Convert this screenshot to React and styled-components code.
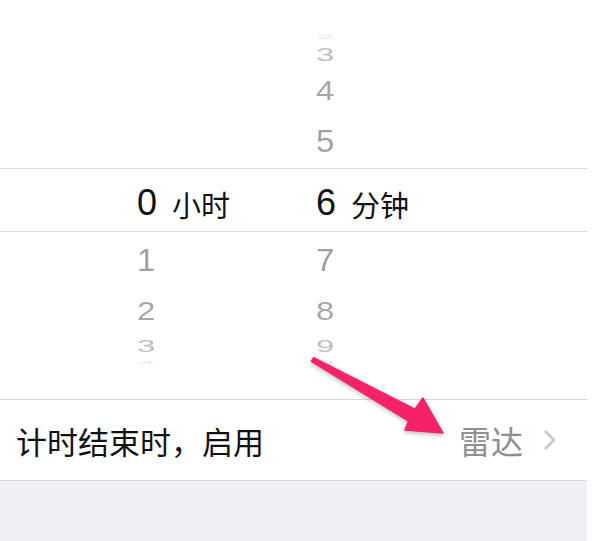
import React from "react";
import styled, { createGlobalStyle } from "styled-components";

const Global = createGlobalStyle`
  html, body { margin: 0; padding: 0; background: #ffffff; }
  body { font-family: "Liberation Sans", "Noto Sans CJK SC", sans-serif; }
`;

const Page = styled.div`
  position: relative;
  width: 613px;
  height: 541px;
  overflow: hidden;
  background: #ffffff;
`;

const Content = styled.div`
  width: 587px;
  display: flex;
  flex-direction: column;
`;

const Picker = styled.div`
  height: 399px;
  display: flex;
  flex-direction: column;
`;

const Wheel = styled.div`
  display: grid;
  grid-template-columns: 137px 179px 1fr;
  height: ${(p) => p.$h}px;
  padding-top: ${(p) => p.$pt || 0}px;
  box-sizing: border-box;
`;

const Column = styled.div`
  grid-column: ${(p) => p.$col};
  display: flex;
  flex-direction: column;
`;

const Item = styled.div`
  height: ${(p) => p.$h}px;
  display: flex;
  align-items: center;
  font-family: "Liberation Sans", "Helvetica Neue", sans-serif;
  font-size: 33px;
  color: ${(p) => p.$c};
  line-height: 1;
  overflow: visible;
  & > span {
    display: inline-block;
    transform: scaleY(${(p) => p.$s});
  }
`;

const Band = styled.div`
  height: 64px;
  border-top: 1px solid #d9d9dc;
  border-bottom: 1px solid #d9d9dc;
  display: grid;
  grid-template-columns: 137px 179px 1fr;
  align-items: center;
  box-sizing: border-box;
  padding-top: 6px;
`;

const Selected = styled.div`
  grid-column: ${(p) => p.$col};
  display: flex;
  align-items: center;
  color: #111111;
`;

const Digit = styled.span`
  font-family: "Liberation Sans", "Helvetica Neue", sans-serif;
  font-size: 36px;
  width: 35px;
`;

const Unit = styled.span`
  font-family: "Noto Sans CJK SC", sans-serif;
  font-size: 29px;
  margin-top: 2px;
`;

const Row = styled.div`
  height: 81px;
  border-top: 1px solid #d6d6d9;
  display: flex;
  align-items: center;
  padding: 0 30px 0 16px;
  box-sizing: border-box;
`;

const Label = styled.div`
  flex: 1;
  font-family: "Noto Sans CJK SC", sans-serif;
  font-size: 31px;
  color: #111111;
`;

const Value = styled.div`
  font-family: "Noto Sans CJK SC", sans-serif;
  font-size: 32px;
  color: #8e8e93;
  margin-right: 20px;
`;

const Footer = styled.div`
  height: 61px;
  border-top: 1px solid #d8d8dc;
  background: #efeff4;
`;

const Overlay = styled.svg`
  position: absolute;
  left: 0;
  top: 0;
  pointer-events: none;
`;

const top = [
  { v: "2", h: 12, s: 0.15, c: "#e6e6e6" },
  { v: "3", h: 22, s: 0.55, c: "#bdbdbd" },
  { v: "4", h: 50, s: 0.82, c: "#a7a7a7" },
  { v: "5", h: 50, s: 0.97, c: "#a0a0a0" },
];

const bottom = [
  { h: 54, s: 0.97, c: "#a0a0a0", hv: "1", mv: "7" },
  { h: 48, s: 0.8, c: "#a8a8a8", hv: "2", mv: "8" },
  { h: 24, s: 0.5, c: "#bdbdbd", hv: "3", mv: "9" },
  { h: 8, s: 0.12, c: "#e6e6e6", hv: "4", mv: "0" },
];

export default function App() {
  return (
    <Page>
      <Global />
      <Content>
        <Picker>
          <Wheel $h={168} $pt={31}>
            <Column $col={3}>
              {top.map((it) => (
                <Item key={it.v} $h={it.h} $s={it.s} $c={it.c}>
                  <span>{it.v}</span>
                </Item>
              ))}
            </Column>
          </Wheel>
          <Band>
            <Selected $col={2}>
              <Digit>0</Digit>
              <Unit>小时</Unit>
            </Selected>
            <Selected $col={3}>
              <Digit>6</Digit>
              <Unit>分钟</Unit>
            </Selected>
          </Band>
          <Wheel $h={167}>
            <Column $col={2}>
              {bottom.map((it) => (
                <Item key={it.hv} $h={it.h} $s={it.s} $c={it.c}>
                  <span>{it.hv}</span>
                </Item>
              ))}
            </Column>
            <Column $col={3}>
              {bottom.map((it) => (
                <Item key={it.mv} $h={it.h} $s={it.s} $c={it.c}>
                  <span>{it.mv}</span>
                </Item>
              ))}
            </Column>
          </Wheel>
        </Picker>
        <Row>
          <Label>计时结束时，启用</Label>
          <Value>雷达</Value>
          <svg width="14" height="22" viewBox="0 0 14 22">
            <path d="M2 2 L11 11 L2 20" fill="none" stroke="#c7c7cc" strokeWidth="2.5" />
          </svg>
        </Row>
        <Footer />
      </Content>
      <Overlay width="613" height="541" viewBox="0 0 613 541">
        <defs>
          <filter id="sh" x="-10%" y="-10%" width="120%" height="130%">
            <feDropShadow dx="0" dy="2" stdDeviation="2" floodColor="#000" floodOpacity="0.25" />
          </filter>
        </defs>
        <polygon
          points="313.7,357.7 414.9,409.2 423,398 443,433 405,430 408.5,421 311.3,361.3"
          fill="#f5216b"
          stroke="#f5216b"
          strokeWidth="1.5"
          strokeLinejoin="round"
          filter="url(#sh)"
        />
      </Overlay>
    </Page>
  );
}
